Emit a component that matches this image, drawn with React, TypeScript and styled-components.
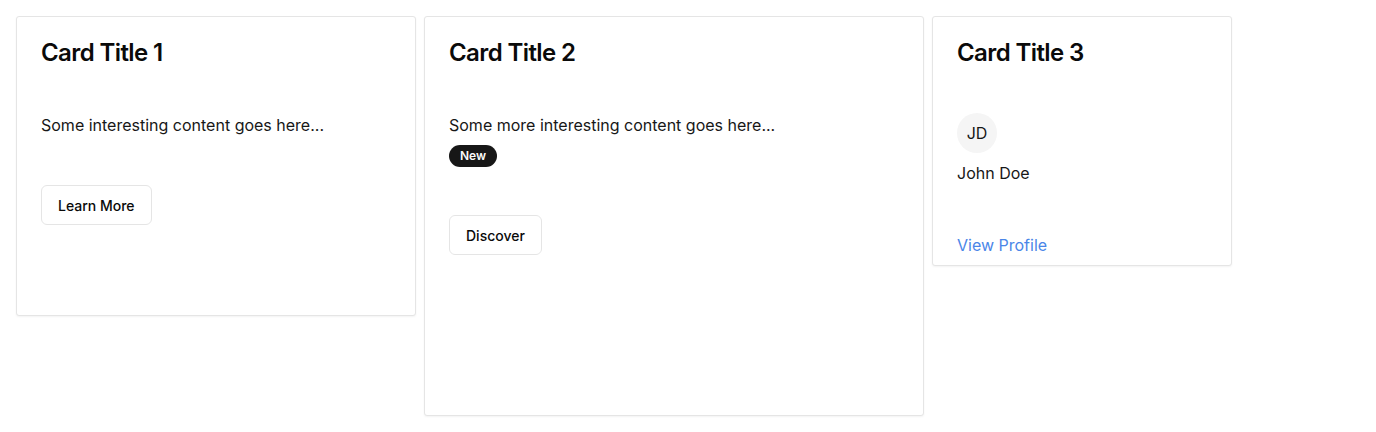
import React from "react";
import styled, { createGlobalStyle } from "styled-components";

const GlobalStyle = createGlobalStyle`
  body {
    margin: 8px;
    background: #ffffff;
    font-family: Inter, "Liberation Sans", sans-serif;
    color: #0a0a0a;
  }
  * {
    box-sizing: border-box;
  }
`;

const SCardRow = styled.div`
  display: flex;
  align-items: flex-start;
  gap: 8px;
  padding: 8px;
`;

const SCard = styled.div<{ $width: number; $height: number }>`
  width: ${(p) => p.$width}px;
  height: ${(p) => p.$height}px;
  overflow: hidden;
  background: #ffffff;
  border: 1px solid #e5e5e5;
  border-radius: 3px;
  box-shadow: 0 1px 2px rgba(0, 0, 0, 0.05);
  display: flex;
  flex-direction: column;
  flex-shrink: 0;
`;

const SCardHeader = styled.div`
  padding: 24px;
`;

const SCardTitle = styled.h3`
  margin: 0;
  font-size: 24px;
  line-height: 1;
  font-weight: 600;
  letter-spacing: -0.025em;
  color: #0a0a0a;
`;

const SCardContent = styled.div`
  padding: 24px;
  display: flex;
  flex-direction: column;
  align-items: flex-start;
`;

const SCardFooter = styled.div`
  padding: 24px;
  display: flex;
  align-items: center;
`;

const SText = styled.p`
  margin: 0;
  font-size: 16px;
  line-height: 24px;
  color: #171717;
`;

const SBadge = styled.span`
  display: inline-flex;
  align-items: center;
  margin-top: 8px;
  padding: 2px 10px;
  border: 1px solid transparent;
  border-radius: 9999px;
  background: #171717;
  color: #fafafa;
  font-size: 12px;
  line-height: 16px;
  font-weight: 600;
`;

const SButton = styled.button`
  height: 40px;
  padding: 0 16px;
  border: 1px solid #e5e5e5;
  border-radius: 6px;
  background: #ffffff;
  color: #0a0a0a;
  font-family: inherit;
  font-size: 14px;
  font-weight: 500;
  cursor: pointer;
`;

const SAvatar = styled.div`
  width: 40px;
  height: 40px;
  border-radius: 50%;
  background: #f5f5f5;
  display: flex;
  align-items: center;
  justify-content: center;
  font-size: 16px;
  color: #171717;
  margin-bottom: 8px;
`;

const SLink = styled.a`
  font-size: 16px;
  line-height: 24px;
  color: #4a86e8;
  text-decoration: none;
`;

function App() {
  return (
    <>
      <GlobalStyle />
      <SCardRow>
        <SCard $width={400} $height={300}>
          <SCardHeader>
            <SCardTitle>Card Title 1</SCardTitle>
          </SCardHeader>
          <SCardContent>
            <SText>Some interesting content goes here...</SText>
          </SCardContent>
          <SCardFooter>
            <SButton>Learn More</SButton>
          </SCardFooter>
        </SCard>

        <SCard $width={500} $height={400}>
          <SCardHeader>
            <SCardTitle>Card Title 2</SCardTitle>
          </SCardHeader>
          <SCardContent>
            <SText>Some more interesting content goes here...</SText>
            <SBadge>New</SBadge>
          </SCardContent>
          <SCardFooter>
            <SButton>Discover</SButton>
          </SCardFooter>
        </SCard>

        <SCard $width={300} $height={250}>
          <SCardHeader>
            <SCardTitle>Card Title 3</SCardTitle>
          </SCardHeader>
          <SCardContent>
            <SAvatar>JD</SAvatar>
            <SText>John Doe</SText>
          </SCardContent>
          <SCardFooter>
            <SLink href="#">View Profile</SLink>
          </SCardFooter>
        </SCard>
      </SCardRow>
    </>
  );
}

export default App;
